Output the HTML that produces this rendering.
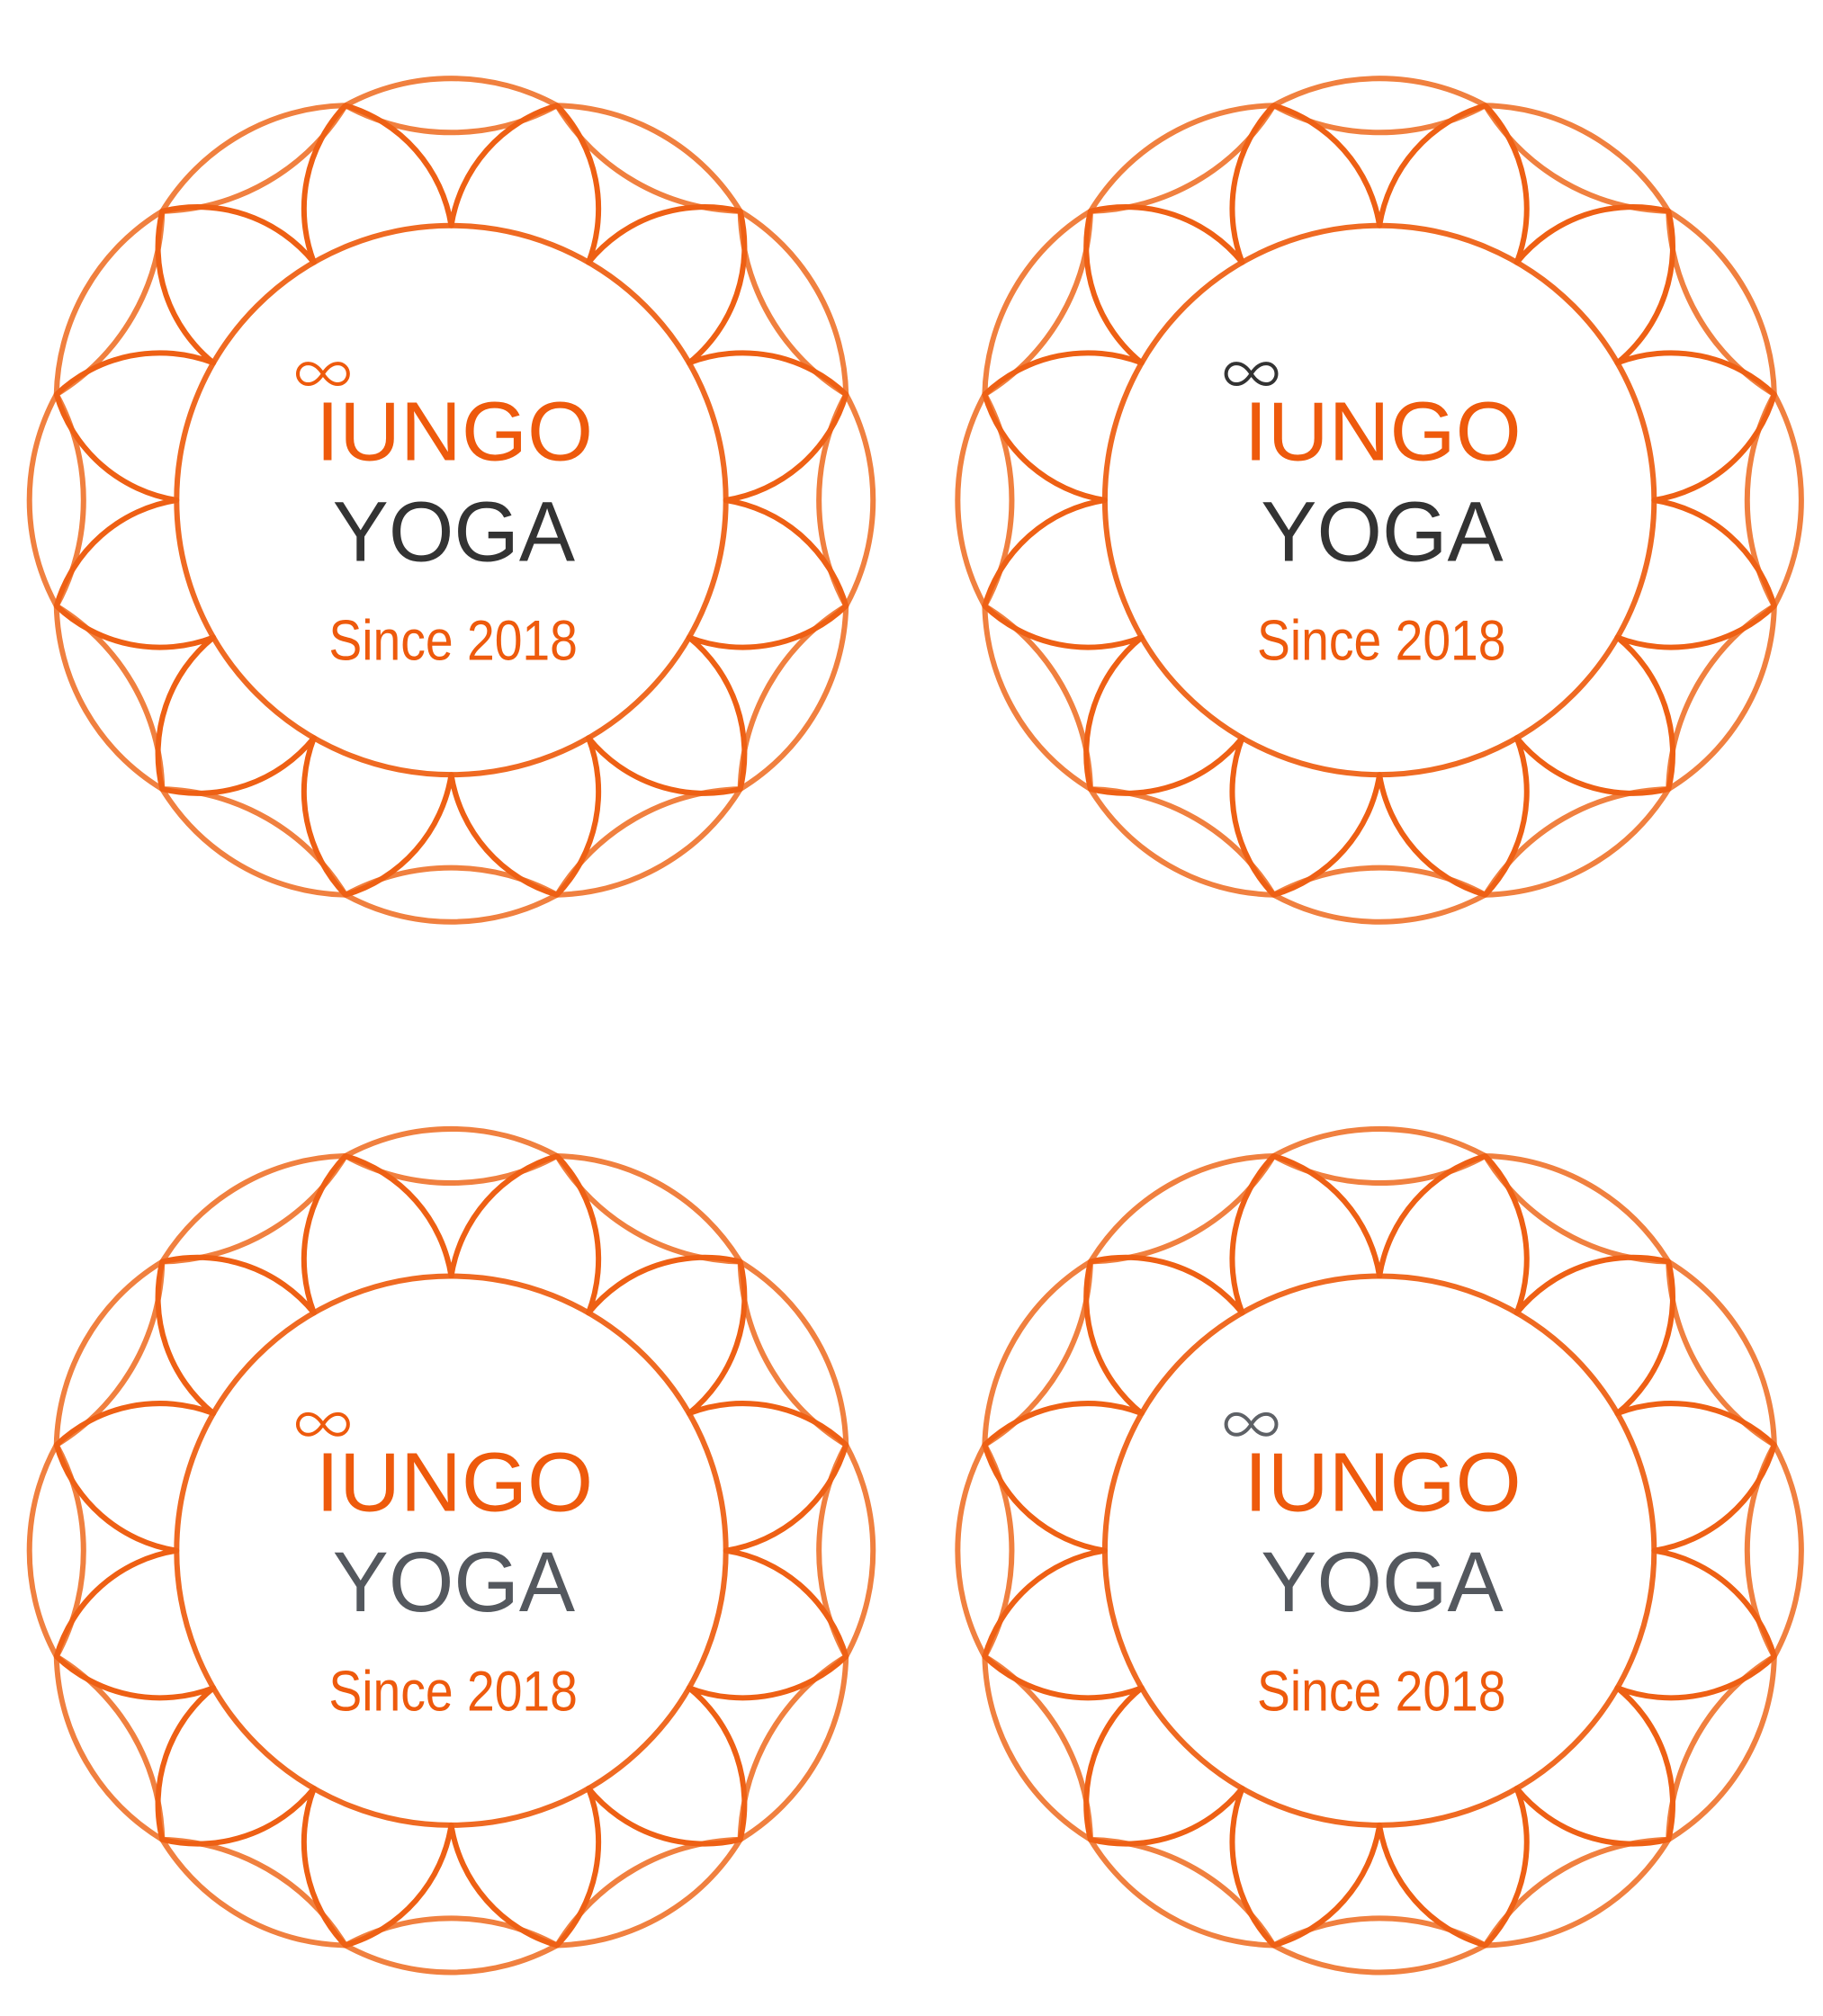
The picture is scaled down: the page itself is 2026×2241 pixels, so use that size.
<!DOCTYPE html>
<html><head><meta charset="utf-8">
<style>
html,body{margin:0;padding:0;background:#fff;}
svg{display:block;}
text{font-family:"Liberation Sans",sans-serif;}
</style></head>
<body>
<svg width="2026" height="2241" viewBox="0 0 1414 1564" xmlns="http://www.w3.org/2000/svg">
<defs>
<symbol id="fl" viewBox="-340 -340 680 680" overflow="visible">
<g fill="none" stroke-width="4.2" stroke-linejoin="round">
<circle cx="0" cy="0" r="213" stroke="#ef6a22"/>
<path stroke="#f0803f" d="M-82.05,-306.2 A171 171 0 0 1 82.05,-306.2 A171 171 0 0 1 224.15,-224.15 A171 171 0 0 1 306.2,-82.05 A171 171 0 0 1 306.2,82.05 A171 171 0 0 1 224.15,224.15 A171 171 0 0 1 82.05,306.2 A171 171 0 0 1 -82.05,306.2 A171 171 0 0 1 -224.15,224.15 A171 171 0 0 1 -306.2,82.05 A171 171 0 0 1 -306.2,-82.05 A171 171 0 0 1 -224.15,-224.15 A171 171 0 0 1 -82.05,-306.2 Z"/>
<path stroke="#f0803f" d="M-82.05,-306.2 A171 171 0 0 0 82.05,-306.2 A171 171 0 0 0 224.15,-224.15 A171 171 0 0 0 306.2,-82.05 A171 171 0 0 0 306.2,82.05 A171 171 0 0 0 224.15,224.15 A171 171 0 0 0 82.05,306.2 A171 171 0 0 0 -82.05,306.2 A171 171 0 0 0 -224.15,224.15 A171 171 0 0 0 -306.2,82.05 A171 171 0 0 0 -306.2,-82.05 A171 171 0 0 0 -224.15,-224.15 A171 171 0 0 0 -82.05,-306.2 Z"/>
<path stroke="#ee6014" d="M0,-213 A116 116 0 0 1 82.05,-306.2 A116 116 0 0 1 106.5,-184.46 A116 116 0 0 1 224.15,-224.15 A116 116 0 0 1 184.46,-106.5 A116 116 0 0 1 306.2,-82.05 A116 116 0 0 1 213,0 A116 116 0 0 1 306.2,82.05 A116 116 0 0 1 184.46,106.5 A116 116 0 0 1 224.15,224.15 A116 116 0 0 1 106.5,184.46 A116 116 0 0 1 82.05,306.2 A116 116 0 0 1 0,213 A116 116 0 0 1 -82.05,306.2 A116 116 0 0 1 -106.5,184.46 A116 116 0 0 1 -224.15,224.15 A116 116 0 0 1 -184.46,106.5 A116 116 0 0 1 -306.2,82.05 A116 116 0 0 1 -213,0 A116 116 0 0 1 -306.2,-82.05 A116 116 0 0 1 -184.46,-106.5 A116 116 0 0 1 -224.15,-224.15 A116 116 0 0 1 -106.5,-184.46 A116 116 0 0 1 -82.05,-306.2 A116 116 0 0 1 0,-213 Z"/>
</g>
</symbol>
<path id="inf" d="M0,0 C-4.5,-7 -8.5,-8 -11.5,-8 C-16.5,-8 -19.5,-4 -19.5,0 C-19.5,4 -16.5,8 -11.5,8 C-8.5,8 -4.5,7 0,0 C4.5,-7 8.5,-8 11.5,-8 C16.5,-8 19.5,-4 19.5,0 C19.5,4 16.5,8 11.5,8 C8.5,8 4.5,7 0,0 Z"/>
</defs>

<g transform="translate(350,388)">
<use href="#fl" x="-340" y="-340" width="680" height="680"/>
<use href="#inf" transform="translate(-99.5,-98)" fill="none" stroke="#ee5a0c" stroke-width="2.8"/>
<text x="-105" y="-31" font-size="65" fill="#ee5a0c" textLength="215" lengthAdjust="spacingAndGlyphs">IUNGO</text>
<text x="-92" y="47" font-size="66" fill="#333333" textLength="188" lengthAdjust="spacingAndGlyphs">YOGA</text>
<text x="-95" y="124" font-size="44" fill="#ee5a0c" textLength="193" lengthAdjust="spacingAndGlyphs">Since 2018</text>
</g>

<g transform="translate(1070,388)">
<use href="#fl" x="-340" y="-340" width="680" height="680"/>
<use href="#inf" transform="translate(-99.5,-98)" fill="none" stroke="#333333" stroke-width="2.8"/>
<text x="-105" y="-31" font-size="65" fill="#ee5a0c" textLength="215" lengthAdjust="spacingAndGlyphs">IUNGO</text>
<text x="-92" y="47" font-size="66" fill="#333333" textLength="188" lengthAdjust="spacingAndGlyphs">YOGA</text>
<text x="-95" y="124" font-size="44" fill="#ee5a0c" textLength="193" lengthAdjust="spacingAndGlyphs">Since 2018</text>
</g>

<g transform="translate(350,1203)">
<use href="#fl" x="-340" y="-340" width="680" height="680"/>
<use href="#inf" transform="translate(-99.5,-98)" fill="none" stroke="#ee5a0c" stroke-width="2.8"/>
<text x="-105" y="-31" font-size="65" fill="#ee5a0c" textLength="215" lengthAdjust="spacingAndGlyphs">IUNGO</text>
<text x="-92" y="47" font-size="66" fill="#54585e" textLength="188" lengthAdjust="spacingAndGlyphs">YOGA</text>
<text x="-95" y="124" font-size="44" fill="#ee5a0c" textLength="193" lengthAdjust="spacingAndGlyphs">Since 2018</text>
</g>

<g transform="translate(1070,1203)">
<use href="#fl" x="-340" y="-340" width="680" height="680"/>
<use href="#inf" transform="translate(-99.5,-98)" fill="none" stroke="#5e6166" stroke-width="2.8"/>
<text x="-105" y="-31" font-size="65" fill="#ee5a0c" textLength="215" lengthAdjust="spacingAndGlyphs">IUNGO</text>
<text x="-92" y="47" font-size="66" fill="#54585e" textLength="188" lengthAdjust="spacingAndGlyphs">YOGA</text>
<text x="-95" y="124" font-size="44" fill="#ee5a0c" textLength="193" lengthAdjust="spacingAndGlyphs">Since 2018</text>
</g>
</svg>
</body></html>
